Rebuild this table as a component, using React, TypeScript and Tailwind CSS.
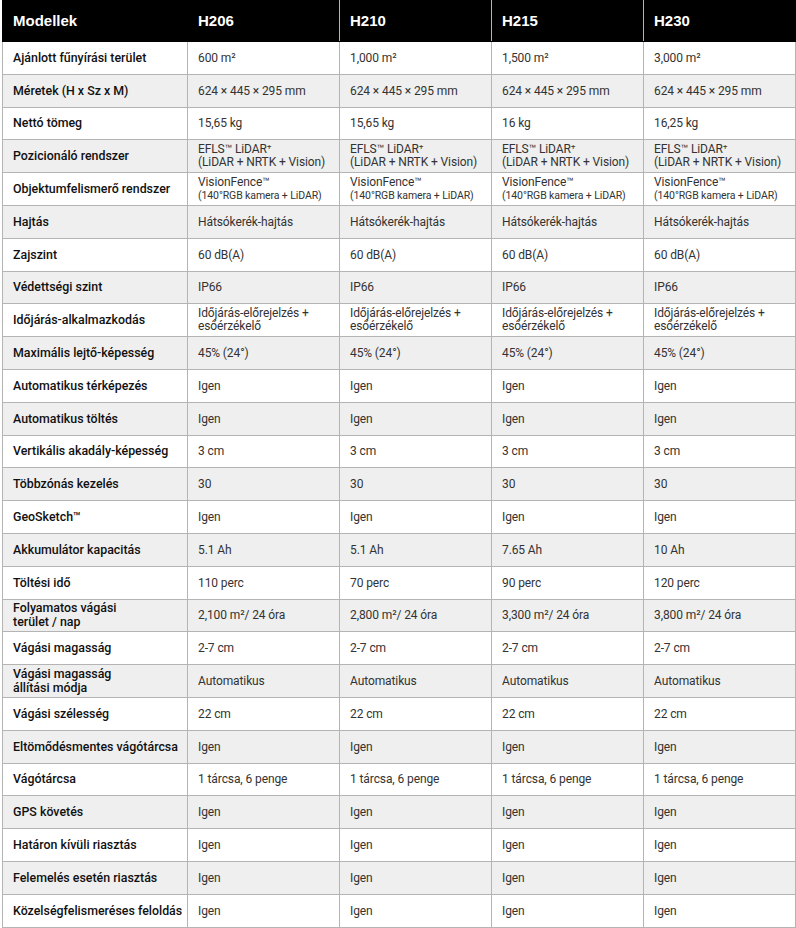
import React from 'react';

type Cell = string | { top: string; bottom: string; small?: boolean };

interface SpecRow {
  label: string;
  values: Cell[];
}

const same = (v: Cell): Cell[] => [v, v, v, v];

const models = ['H206', 'H210', 'H215', 'H230'];

const rows: SpecRow[] = [
  { label: 'Ajánlott fűnyírási terület', values: ['600 m²', '1,000 m²', '1,500 m²', '3,000 m²'] },
  { label: 'Méretek (H x Sz x M)', values: same('624 × 445 × 295 mm') },
  { label: 'Nettó tömeg', values: ['15,65 kg', '15,65 kg', '16 kg', '16,25 kg'] },
  { label: 'Pozicionáló rendszer', values: same({ top: 'EFLS™ LiDAR⁺', bottom: '(LiDAR + NRTK + Vision)' }) },
  {
    label: 'Objektumfelismerő rendszer',
    values: same({ top: 'VisionFence™', bottom: '(140°RGB kamera + LiDAR)', small: true }),
  },
  { label: 'Hajtás', values: same('Hátsókerék-hajtás') },
  { label: 'Zajszint', values: same('60 dB(A)') },
  { label: 'Védettségi szint', values: same('IP66') },
  { label: 'Időjárás-alkalmazkodás', values: same({ top: 'Időjárás-előrejelzés +', bottom: 'esőérzékelő' }) },
  { label: 'Maximális lejtő-képesség', values: same('45% (24°)') },
  { label: 'Automatikus térképezés', values: same('Igen') },
  { label: 'Automatikus töltés', values: same('Igen') },
  { label: 'Vertikális akadály-képesség', values: same('3 cm') },
  { label: 'Többzónás kezelés', values: same('30') },
  { label: 'GeoSketch™', values: same('Igen') },
  { label: 'Akkumulátor kapacitás', values: ['5.1 Ah', '5.1 Ah', '7.65 Ah', '10 Ah'] },
  { label: 'Töltési idő', values: ['110 perc', '70 perc', '90 perc', '120 perc'] },
  {
    label: 'Folyamatos vágási\nterület / nap',
    values: ['2,100 m²/ 24 óra', '2,800 m²/ 24 óra', '3,300 m²/ 24 óra', '3,800 m²/ 24 óra'],
  },
  { label: 'Vágási magasság', values: same('2-7 cm') },
  { label: 'Vágási magasság\nállítási módja', values: same('Automatikus') },
  { label: 'Vágási szélesség', values: same('22 cm') },
  { label: 'Eltömődésmentes vágótárcsa', values: same('Igen') },
  { label: 'Vágótárcsa', values: same('1 tárcsa, 6 penge') },
  { label: 'GPS követés', values: same('Igen') },
  { label: 'Határon kívüli riasztás', values: same('Igen') },
  { label: 'Felemelés esetén riasztás', values: same('Igen') },
  { label: 'Közelségfelismeréses feloldás', values: same('Igen') },
];

const ValueCell: React.FC<{ value: Cell }> = ({ value }) => {
  if (typeof value === 'string') return <span>{value}</span>;
  return (
    <div className="flex flex-col leading-[13px]">
      <span>{value.top}</span>
      <span className={value.small ? 'text-[10.5px]' : ''}>{value.bottom}</span>
    </div>
  );
};

export default function App() {
  return (
    <div className="w-[796px] h-[928px] overflow-hidden bg-white">
      <table className="ml-[2px] w-[793px] table-fixed border-collapse">
        <colgroup>
          <col className="w-[185px]" />
          <col className="w-[152px]" />
          <col className="w-[152px]" />
          <col className="w-[152px]" />
          <col className="w-[152px]" />
        </colgroup>
        <thead>
          <tr className="h-[41px] bg-black text-white">
            <th className="border border-black px-[10px] text-left align-middle text-[15px] font-bold font-['Liberation_Sans',Arial,sans-serif]">
              Modellek
            </th>
            {models.map((m, i) => (
              <th
                key={m}
                className={`border-y border-black ${i < 3 ? 'border-r border-r-[#b4b4b4]' : 'border-r border-r-black'} px-[10px] text-left align-middle text-[15px] font-bold font-['Liberation_Sans',Arial,sans-serif]`}
              >
                {m}
              </th>
            ))}
          </tr>
        </thead>
        <tbody>
          {rows.map((row, ri) => (
            <tr key={row.label} className={`h-[32.8px] ${ri % 2 === 1 ? 'bg-[#efefef]' : 'bg-white'}`}>
              <td className="border border-[#b4b4b4] pl-[10px] pr-0 align-middle whitespace-pre text-[12.4px] leading-[14px] font-medium text-[#111] font-['Roboto',Arial,sans-serif]">
                {row.label}
              </td>
              {row.values.map((v, vi) => (
                <td
                  key={vi}
                  className="border border-[#b4b4b4] px-[10px] align-middle text-[12px] tracking-[-0.1px] text-[#333] font-['Roboto',Arial,sans-serif]"
                >
                  <ValueCell value={v} />
                </td>
              ))}
            </tr>
          ))}
        </tbody>
      </table>
    </div>
  );
}
